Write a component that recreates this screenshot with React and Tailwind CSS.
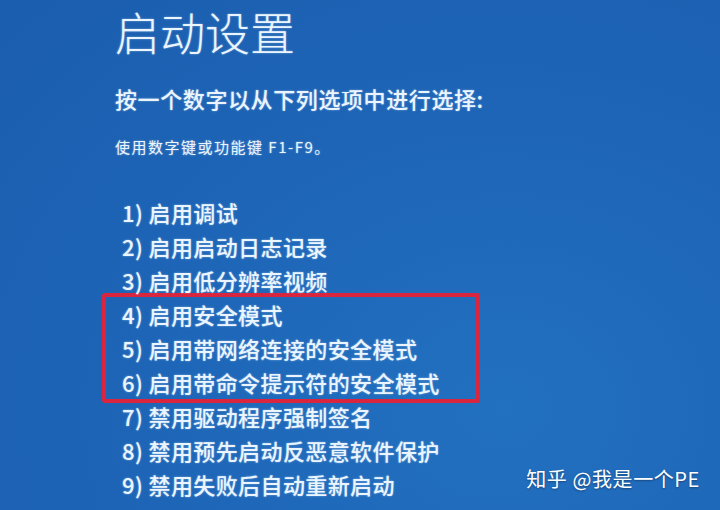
import React from 'react';

const items = [
  '1) 启用调试',
  '2) 启用启动日志记录',
  '3) 启用低分辨率视频',
  '4) 启用安全模式',
  '5) 启用带网络连接的安全模式',
  '6) 启用带命令提示符的安全模式',
  '7) 禁用驱动程序强制签名',
  '8) 禁用预先启动反恶意软件保护',
  '9) 禁用失败后自动重新启动',
];

const font = "font-['Noto_Sans_CJK_SC','Noto_Sans',sans-serif]";

function Row({ text }) {
  return (
    <div className="h-[34px] leading-[34px] text-[22px] tracking-[0.4px] whitespace-nowrap">{text}</div>
  );
}

export default function App() {
  const top = items.slice(0, 3);
  const boxed = items.slice(3, 6);
  const rest = items.slice(6);

  return (
    <div
      className={`${font} relative w-[720px] h-[510px] overflow-hidden bg-[#1e64b6] bg-[radial-gradient(ellipse_at_70%_80%,#2270c0_0%,#1e66b8_45%,#1b5dae_100%)] text-[#eaf5ff] [text-shadow:0_0_2px_rgba(220,240,255,0.55)]`}
    >
      <div className="pl-[115px] pt-[4px]">
        <h1 className="h-[56px] leading-[56px] text-[45px] font-light">启动设置</h1>
        <p className="mt-[24px] h-[28px] leading-[28px] text-[22px] font-medium tracking-[0.6px] whitespace-nowrap">
          按一个数字以从下列选项中进行选择:
        </p>
        <p className="mt-[19px] h-[32px] leading-[32px] text-[15px] tracking-[1.5px] whitespace-nowrap">
          使用数字键或功能键 F1-F9。
        </p>

        <div className="mt-[32px] ml-[7px] font-medium">
          {top.map((t) => (
            <Row key={t} text={t} />
          ))}
          <div className="w-[378px] -ml-[20px] pl-[16px] -mt-[4px] -mb-[4px] border-[4px] border-[#d9253d] rounded-[3px]">
            {boxed.map((t) => (
              <Row key={t} text={t} />
            ))}
          </div>
          {rest.map((t) => (
            <Row key={t} text={t} />
          ))}
        </div>
      </div>

      <div className="absolute right-[20px] bottom-[16px] text-[20px] tracking-[0.6px] text-white whitespace-nowrap [text-shadow:0_1px_2px_rgba(0,0,0,0.35)]">
        知乎 @我是一个PE
      </div>
    </div>
  );
}
